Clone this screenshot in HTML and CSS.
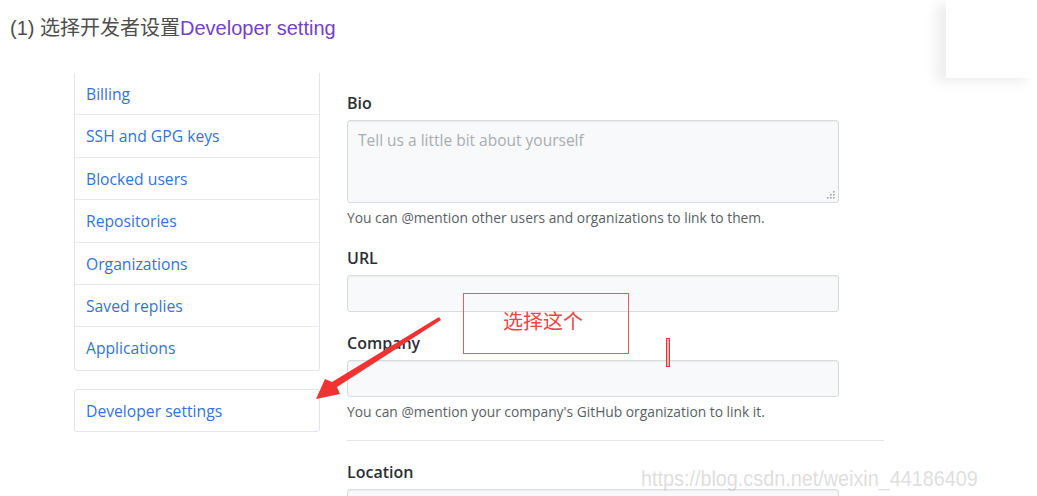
FILE: index.html
```html
<!DOCTYPE html>
<html>
<head>
<meta charset="utf-8">
<link rel="stylesheet" href="styles.css">
</head>
<body>
<p class="intro">(1) 选择开发者设置<span class="intro-link">Developer setting</span></p>

<div class="layout">
  <nav class="sidebar">
    <ul class="menu menu-top">
      <li class="menu-item">Billing</li>
      <li class="menu-item">SSH and GPG keys</li>
      <li class="menu-item">Blocked users</li>
      <li class="menu-item">Repositories</li>
      <li class="menu-item">Organizations</li>
      <li class="menu-item">Saved replies</li>
      <li class="menu-item">Applications</li>
    </ul>
    <ul class="menu menu-dev">
      <li class="menu-item">Developer settings</li>
    </ul>
  </nav>

  <main class="form">
    <div class="field">
      <label class="label">Bio</label>
      <div class="textarea">
        <span class="placeholder">Tell us a little bit about yourself</span>
        <svg class="grip" width="9" height="9" viewBox="0 0 9 9">
          <rect x="7" y="1" width="1.6" height="1.6" fill="#9aa0a6"/>
          <rect x="7" y="4" width="1.6" height="1.6" fill="#9aa0a6"/>
          <rect x="7" y="7" width="1.6" height="1.6" fill="#9aa0a6"/>
          <rect x="4" y="4" width="1.6" height="1.6" fill="#9aa0a6"/>
          <rect x="4" y="7" width="1.6" height="1.6" fill="#9aa0a6"/>
          <rect x="1" y="7" width="1.6" height="1.6" fill="#9aa0a6"/>
        </svg>
      </div>
      <p class="note note-bio">You can @mention other users and organizations to link to them.</p>
    </div>
    <div class="field">
      <label class="label">URL</label>
      <div class="input"></div>
    </div>
    <div class="field">
      <label class="label">Company</label>
      <div class="input input-company"></div>
      <p class="note note-company">You can @mention your company's GitHub organization to link it.</p>
    </div>
    <hr class="divider">
    <div class="field">
      <label class="label">Location</label>
      <div class="input"></div>
    </div>
  </main>
</div>

<div class="corner-card"></div>

<div class="callout">选择这个</div>
<div class="cursor-mark"></div>

<svg class="arrow" width="1037" height="496" viewBox="0 0 1037 496">
  <polygon points="439,317 441,320 337,387 340,394 316,399 325,379 332,382" fill="#f03232"/>
</svg>

<div class="watermark">https://blog.csdn.net/weixin_44186409</div>
</body>
</html>
```

FILE: styles.css
```css
html, body {
  margin: 0;
  padding: 0;
  background: #ffffff;
  width: 1037px;
  height: 496px;
  overflow: hidden;
}

body {
  font-family: "Open Sans", "Noto Sans", sans-serif;
  position: relative;
}

.intro {
  margin: 0;
  padding: 16px 0 0 10px;
  height: 24px;
  line-height: 24px;
  font-family: "Liberation Sans", "Noto Sans CJK SC", sans-serif;
  font-size: 20px;
  color: #4d4d4d;
}

.intro-link {
  color: #7342c6;
}

.layout {
  display: flex;
  gap: 27px;
  margin-top: 33px;
  padding-left: 74px;
}

.sidebar {
  width: 246px;
  display: flex;
  flex-direction: column;
  gap: 18px;
}

.menu {
  list-style: none;
  margin: 0;
  padding: 0;
  border: 1px solid #e1e4e8;
  border-radius: 3px;
  background: #fff;
}

.menu-top {
  border-top: none;
  border-radius: 0 0 3px 3px;
}

.menu-item {
  box-sizing: border-box;
  height: 42.4px;
  line-height: 42px;
  padding-left: 11px;
  font-size: 15.7px;
  color: #3474d6;
  border-bottom: 1px solid #e8eaed;
}

.menu-item:last-child {
  border-bottom: none;
}

.menu-dev .menu-item {
  height: 41px;
  line-height: 42px;
}

.form {
  width: 537px;
  padding-top: 20px;
}

.field {
  margin-bottom: 21px;
}

.label {
  display: block;
  font-size: 16px;
  font-weight: 600;
  line-height: 20px;
  color: #2b2f34;
  margin-bottom: 7px;
}

.textarea {
  position: relative;
  box-sizing: border-box;
  width: 492px;
  height: 83px;
  border: 1px solid #d8dbdf;
  border-radius: 3px;
  background: #f8f9fa;
  padding: 8px 10px;
  box-shadow: inset 0 1px 2px rgba(27, 31, 35, 0.06);
}

.placeholder {
  font-size: 15.5px;
  line-height: 22px;
  color: #a9adb2;
}

.grip {
  position: absolute;
  right: 3px;
  bottom: 3px;
}

.input {
  box-sizing: border-box;
  width: 492px;
  height: 37px;
  border: 1px solid #d8dbdf;
  border-radius: 3px;
  background: #f8f9fa;
  box-shadow: inset 0 1px 2px rgba(27, 31, 35, 0.06);
}

.input-company {
  margin-top: 1px;
}

.note {
  margin: 5px 0 0;
  font-size: 13.8px;
  line-height: 18px;
  color: #595f66;
}

.note-bio {
  margin-top: 6px;
}

.note-company {
  margin-top: 6px;
}

.divider {
  margin: -2px 0 21px;
  border: none;
  border-top: 1px solid #e1e4e8;
  height: 0;
}

.corner-card {
  position: absolute;
  top: 0;
  right: 0;
  width: 91px;
  height: 78px;
  background: #fff;
  box-shadow: -10px 4px 12px rgba(0, 0, 0, 0.07);
}

.callout {
  position: absolute;
  left: 463px;
  top: 293px;
  box-sizing: border-box;
  width: 166px;
  height: 61px;
  border: 1px solid #ea5c5c;
  padding: 15px 0 0 39px;
  font-family: "Noto Sans CJK SC", sans-serif;
  font-size: 20px;
  line-height: 24px;
  color: #e84646;
}

.cursor-mark {
  position: absolute;
  left: 666px;
  top: 338px;
  box-sizing: border-box;
  width: 4px;
  height: 29px;
  border: 1px solid #e23a3a;
  background: #f6b2b2;
}

.arrow {
  position: absolute;
  left: 0;
  top: 0;
  pointer-events: none;
}

.watermark {
  position: absolute;
  left: 641px;
  top: 466px;
  font-family: "Liberation Sans", sans-serif;
  font-size: 22px;
  line-height: 26px;
  color: rgba(200, 200, 200, 0.6);
  transform: scaleX(0.9);
  transform-origin: left top;
  white-space: nowrap;
}
```
